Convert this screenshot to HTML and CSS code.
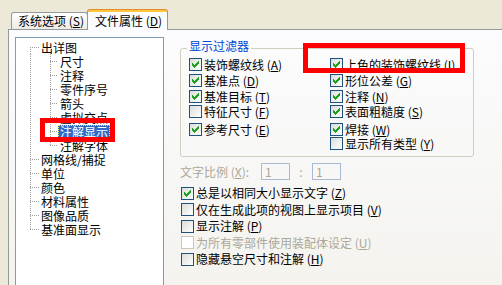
FILE: index.html
```html
<!DOCTYPE html>
<html lang="zh-CN">
<head>
<meta charset="utf-8">
<title>文件属性</title>
<link rel="stylesheet" href="styles.css">
</head>
<body>
<svg class="defs" width="0" height="0" aria-hidden="true">
  <symbol id="chk" viewBox="0 0 11 11">
    <path d="M8 2h1v1h-1z M7 3h2v1h-2z M2 4h1v1h-1z M6 4h3v1h-3z M2 5h2v1h-2z M5 5h3v1h-3z M2 6h5v1h-5z M3 7h3v1h-3z M4 8h1v1h-1z"/>
  </symbol>
</svg>

<div class="tabs">
  <div class="tab">系统选项 (<u>S</u>)</div>
  <div class="tab active">文件属性 (<u>D</u>)</div>
</div>

<div class="panel">
  <div class="tree">
    <div class="row root first"><span class="j"></span><span class="lbl">出详图</span></div>
    <div class="row child"><span class="v"></span><span class="j"></span><span class="lbl">尺寸</span></div>
    <div class="row child"><span class="v"></span><span class="j"></span><span class="lbl">注释</span></div>
    <div class="row child"><span class="v"></span><span class="j"></span><span class="lbl">零件序号</span></div>
    <div class="row child"><span class="v"></span><span class="j"></span><span class="lbl">箭头</span></div>
    <div class="row child"><span class="v"></span><span class="j"></span><span class="lbl">虚拟交点</span></div>
    <div class="row child"><span class="v"></span><span class="j"></span><span class="lbl sel">注解显示</span></div>
    <div class="row child last"><span class="v"></span><span class="j"></span><span class="lbl">注解字体</span></div>
    <div class="row root"><span class="j"></span><span class="lbl">网格线/捕捉</span></div>
    <div class="row root"><span class="j"></span><span class="lbl">单位</span></div>
    <div class="row root"><span class="j"></span><span class="lbl">颜色</span></div>
    <div class="row root"><span class="j"></span><span class="lbl">材料属性</span></div>
    <div class="row root"><span class="j"></span><span class="lbl">图像品质</span></div>
    <div class="row root last"><span class="j"></span><span class="lbl">基准面显示</span></div>
  </div>

  <div class="right">
    <fieldset class="group">
      <legend>显示过滤器</legend>
      <div class="grid">
        <label class="cbx"><span class="box"><svg><use href="#chk"/></svg></span><span>装饰螺纹线 (<u>A</u>)</span></label>
        <label class="cbx"><span class="box"><svg><use href="#chk"/></svg></span><span>基准点 (<u>D</u>)</span></label>
        <label class="cbx"><span class="box"><svg><use href="#chk"/></svg></span><span>基准目标 (<u>T</u>)</span></label>
        <label class="cbx"><span class="box"></span><span>特征尺寸 (<u>F</u>)</span></label>
        <label class="cbx"><span class="box"><svg><use href="#chk"/></svg></span><span>参考尺寸 (<u>E</u>)</span></label>
        <span class="cell-empty"></span>
        <label class="cbx"><span class="box"><svg><use href="#chk"/></svg></span><span>上色的装饰螺纹线 (<u>I</u>)</span></label>
        <label class="cbx"><span class="box"><svg><use href="#chk"/></svg></span><span>形位公差 (<u>G</u>)</span></label>
        <label class="cbx"><span class="box"><svg><use href="#chk"/></svg></span><span>注释 (<u>N</u>)</span></label>
        <label class="cbx"><span class="box"><svg><use href="#chk"/></svg></span><span>表面粗糙度 (<u>S</u>)</span></label>
        <label class="cbx"><span class="box"><svg><use href="#chk"/></svg></span><span>焊接 (<u>W</u>)</span></label>
        <label class="cbx"><span class="box"></span><span>显示所有类型 (<u>Y</u>)</span></label>
      </div>
    </fieldset>

    <div class="ratio">
      <span class="ratio-label">文字比例 (<u>X</u>):</span>
      <span class="inp">1</span>
      <span class="colon">:</span>
      <span class="inp">1</span>
    </div>

    <div class="opts">
      <label class="cbx"><span class="box"><svg><use href="#chk"/></svg></span><span>总是以相同大小显示文字 (<u>Z</u>)</span></label>
      <label class="cbx"><span class="box"></span><span>仅在生成此项的视图上显示项目 (<u>V</u>)</span></label>
      <label class="cbx"><span class="box"></span><span>显示注解 (<u>P</u>)</span></label>
      <label class="cbx dis"><span class="box"></span><span>为所有零部件使用装配体设定 (<u>U</u>)</span></label>
      <label class="cbx"><span class="box"></span><span>隐藏悬空尺寸和注解 (<u>H</u>)</span></label>
    </div>
  </div>
</div>

<div class="mark mark-1"></div>
<div class="mark mark-2"></div>
</body>
</html>
```

FILE: styles.css
```css
* { box-sizing: border-box; }

html, body {
  margin: 0;
  height: 100%;
}

body {
  position: relative;
  overflow: hidden;
  background: #ECE9D8;
  color: #000;
  font: 12px/14px "Noto Sans CJK SC", "Noto Sans", sans-serif;
  --dotv: repeating-linear-gradient(to bottom, #A0A0A0 0 1px, transparent 1px 2px);
  --doth: repeating-linear-gradient(to right, #A0A0A0 0 1px, transparent 1px 2px);
}

.defs { position: absolute; width: 0; height: 0; }

/* ---------- tabs ---------- */
.tabs {
  position: relative;
  z-index: 2;
  display: flex;
  align-items: flex-end;
  height: 29px;
  padding-left: 11px;
}

.tab {
  width: 77px;
  height: 17px;
  padding-left: 6px;
  border: 1px solid #919B9C;
  border-bottom: 0;
  border-radius: 3px 3px 0 0;
  background: linear-gradient(#FFFFFF, #ECEBE6);
  line-height: 16px;
  white-space: nowrap;
}

.tab.active {
  position: relative;
  width: 81px;
  height: 21px;
  margin-left: -1px;
  margin-bottom: -1px;
  padding-left: 7px;
  padding-top: 2px;
  border-top: 1px solid #E68B2C;
  background: linear-gradient(#FFC83C 0 2px, #FCFCFE 2px);
  line-height: 17px;
}

/* ---------- panel ---------- */
.panel {
  display: flex;
  align-items: flex-start;
  height: 256px;
  overflow: hidden;
  margin-left: 8px;
  padding: 7px 0 0 6px;
  border-top: 1px solid #919B9C;
  border-left: 1px solid #919B9C;
  background: linear-gradient(#FCFCFE, #F4F3EE);
}

/* ---------- tree ---------- */
.tree {
  flex: none;
  width: 149px;
  height: 249px;
  padding-top: 2px;
  border: 1px solid #7F9DB9;
  background: #FFFFFF;
}

.row {
  display: flex;
  height: 14px;
  padding-left: 10px;
}

.row .v,
.row .j { flex: none; height: 14px; }

.v {
  width: 20px;
  background: var(--dotv) 4px 0 / 1px 14px no-repeat;
}

.j {
  width: 13px;
  background:
    var(--dotv) 4px 0 / 1px 14px no-repeat,
    var(--doth) 4px 7px / 9px 1px no-repeat;
}

.child .j {
  width: 12px;
  background:
    var(--dotv) 4px 0 / 1px 14px no-repeat,
    var(--doth) 4px 7px / 8px 1px no-repeat;
}

.root.first .j {
  background:
    var(--dotv) 4px 7px / 1px 7px no-repeat,
    var(--doth) 4px 7px / 9px 1px no-repeat;
}

.root.last .j {
  background:
    var(--dotv) 4px 0 / 1px 8px no-repeat,
    var(--doth) 4px 7px / 9px 1px no-repeat;
}

.child.last .j {
  background:
    var(--dotv) 4px 0 / 1px 8px no-repeat,
    var(--doth) 4px 7px / 8px 1px no-repeat;
}

.lbl {
  align-self: center;
  padding: 0 2px;
  line-height: 13px;
  white-space: nowrap;
}

.lbl.sel {
  background: #316AC5;
  color: #FFFFFF;
  outline: 1px dotted #F0E060;
  outline-offset: -1px;
}

/* ---------- right side ---------- */
.right {
  flex: none;
  margin-left: 16px;
}

.group {
  width: 294px;
  height: 117px;
  margin: 3px 0 0;
  padding: 2px 0 0 8px;
  border: 1px solid #D0D0BF;
  border-radius: 3px;
}

.group legend {
  margin-left: -2px;
  padding: 0 2px 4px;
  color: #0046D5;
  line-height: 12px;
}

.grid {
  display: grid;
  grid-template-columns: 141px auto;
  grid-template-rows: 16px 16px 15px 18px 14px 16px;
  grid-auto-flow: column;
}

.cbx {
  display: flex;
  align-items: center;
  gap: 2px;
  height: 13px;
  white-space: nowrap;
}

.box {
  flex: none;
  width: 13px;
  height: 13px;
  border: 1px solid #1C5180;
  background: linear-gradient(135deg, #DCDCD7, #FFFFFF);
}

.box svg {
  display: block;
  width: 11px;
  height: 11px;
  fill: #21A121;
  shape-rendering: crispEdges;
}

.cbx.dis { color: #ACA899; }
.cbx.dis .box {
  border-color: #CAC8BB;
  background: #FFFFFF;
}

.ratio {
  display: flex;
  align-items: center;
  height: 17px;
  margin-top: 6px;
  color: #ACA899;
}

.ratio-label { width: 81px; white-space: nowrap; }

.inp {
  width: 29px;
  height: 17px;
  padding-left: 3px;
  border: 1px solid #A9BBD3;
  line-height: 15px;
}

.colon { width: 22px; text-align: center; }

.opts {
  display: grid;
  grid-template-rows: 16px 17px 16px 17px 16px;
  align-items: center;
  margin-top: 5px;
  padding-left: 1px;
}

/* ---------- annotation overlays ---------- */
.mark {
  position: absolute;
  border: 5px solid #FF0000;
}

.mark-1 { left: 40px; top: 118px; width: 75px; height: 24px; }
.mark-2 { left: 303px; top: 43px; width: 162px; height: 30px; }
```
